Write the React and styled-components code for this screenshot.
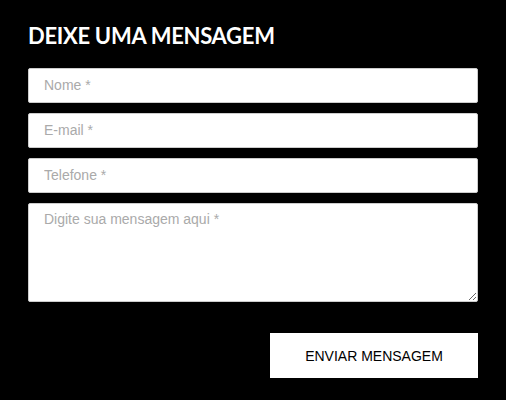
import React from "react";
import styled, { createGlobalStyle } from "styled-components";

const GlobalStyle = createGlobalStyle`
  html, body {
    margin: 0;
    padding: 0;
    background: #000;
  }
  * { box-sizing: border-box; }
`;

const Section = styled.section`
  width: 506px;
  height: 400px;
  background: #000;
  padding: 22px 28px 0 28px;
`;

const Title = styled.h2`
  margin: 0 0 19px 0;
  font-family: Lato, "Liberation Sans", sans-serif;
  font-weight: 700;
  font-size: 22px;
  line-height: 27px;
  color: #fff;
  letter-spacing: -0.3px;
`;

const Form = styled.form`
  display: flex;
  flex-direction: column;
  gap: 10px;
`;

const fieldStyles = `
  width: 450px;
  border: 1px solid #ccc;
  border-radius: 2px;
  background: #fff;
  font-family: "Liberation Sans", Arial, sans-serif;
  font-size: 14px;
  color: #333;
  outline: none;
  &::placeholder {
    color: #aaa;
  }
`;

const Input = styled.input`
  ${fieldStyles}
  height: 35px;
  padding: 0 15px 2px;
`;

const TextArea = styled.textarea`
  ${fieldStyles}
  height: 99px;
  padding: 7px 15px;
  resize: vertical;
`;

const Actions = styled.div`
  display: flex;
  justify-content: flex-end;
  margin-top: 21px;
`;

const Button = styled.button`
  width: 208px;
  height: 45px;
  background: #fff;
  border: none;
  border-radius: 0;
  font-family: "Liberation Sans", Arial, sans-serif;
  font-size: 14px;
  color: #000;
  text-transform: uppercase;
  cursor: pointer;
`;

export default function App() {
  return (
    <>
      <GlobalStyle />
      <Section>
        <Title>DEIXE UMA MENSAGEM</Title>
        <Form onSubmit={(e) => e.preventDefault()}>
          <Input type="text" placeholder="Nome *" />
          <Input type="email" placeholder="E-mail *" />
          <Input type="tel" placeholder="Telefone *" />
          <TextArea placeholder="Digite sua mensagem aqui *" />
          <Actions>
            <Button type="submit">Enviar mensagem</Button>
          </Actions>
        </Form>
      </Section>
    </>
  );
}
